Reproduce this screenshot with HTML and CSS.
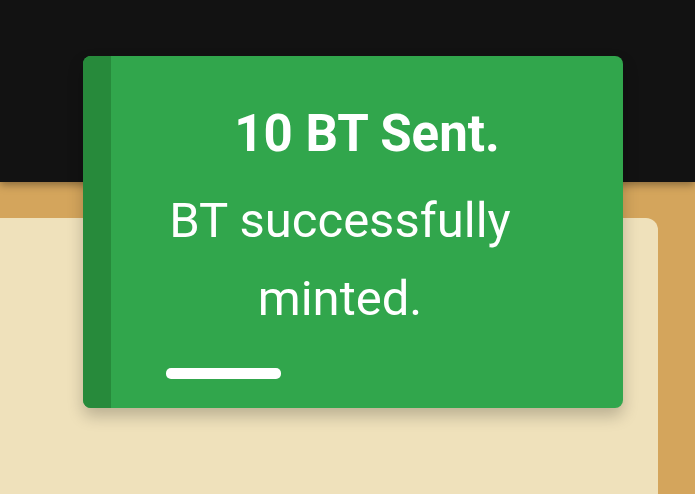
FILE: index.html
```html
<!DOCTYPE html>
<html>
<head>
<meta charset="utf-8">
<link rel="stylesheet" href="styles.css">
</head>
<body>
<div class="page">
  <header class="topbar"></header>
  <main class="stage">
    <section class="card"></section>
  </main>
  <div class="toast" role="status">
    <div class="toast-strip"></div>
    <div class="toast-body">
      <div class="toast-title">10 BT Sent.</div>
      <div class="toast-msg">BT successfully minted.</div>
      <div class="toast-progress"></div>
    </div>
  </div>
</div>
</body>
</html>
```
FILE: styles.css
```css
html, body {
  margin: 0;
  padding: 0;
}
body {
  width: 695px;
  height: 494px;
  overflow: hidden;
  background: #d4a55c;
  font-family: Roboto, "Liberation Sans", sans-serif;
}
.page {
  position: relative;
  width: 695px;
  height: 494px;
  display: flex;
  flex-direction: column;
}
.topbar {
  height: 182px;
  flex: none;
  background: #121212;
  box-shadow: 0 3px 8px rgba(0, 0, 0, 0.35);
  position: relative;
  z-index: 1;
}
.stage {
  flex: 1;
  padding-top: 36px;
  padding-right: 37px;
  display: flex;
}
.card {
  flex: 1;
  margin-left: -20px;
  background: #efe1bb;
  border-radius: 0 12px 0 0;
}
.toast {
  position: absolute;
  left: 83px;
  top: 56px;
  width: 540px;
  height: 352px;
  z-index: 2;
  display: flex;
  background: #31a64c;
  border-radius: 8px;
  overflow: hidden;
  box-shadow: 0 8px 16px rgba(0, 0, 0, 0.22);
  color: #ffffff;
}
.toast-strip {
  width: 28px;
  flex: none;
  background: #278a3b;
}
.toast-body {
  flex: 1;
  display: flex;
  flex-direction: column;
  padding-top: 50px;
}
.toast-title {
  font-weight: 700;
  font-size: 51px;
  line-height: 56px;
  text-align: center;
}
.toast-msg {
  margin-top: 20px;
  font-size: 49px;
  line-height: 78px;
  text-align: center;
  padding: 0 84px 0 30px;
}
.toast-progress {
  margin-top: 30px;
  margin-left: 55px;
  width: 115px;
  height: 11px;
  border-radius: 5px;
  background: #ffffff;
}
```
